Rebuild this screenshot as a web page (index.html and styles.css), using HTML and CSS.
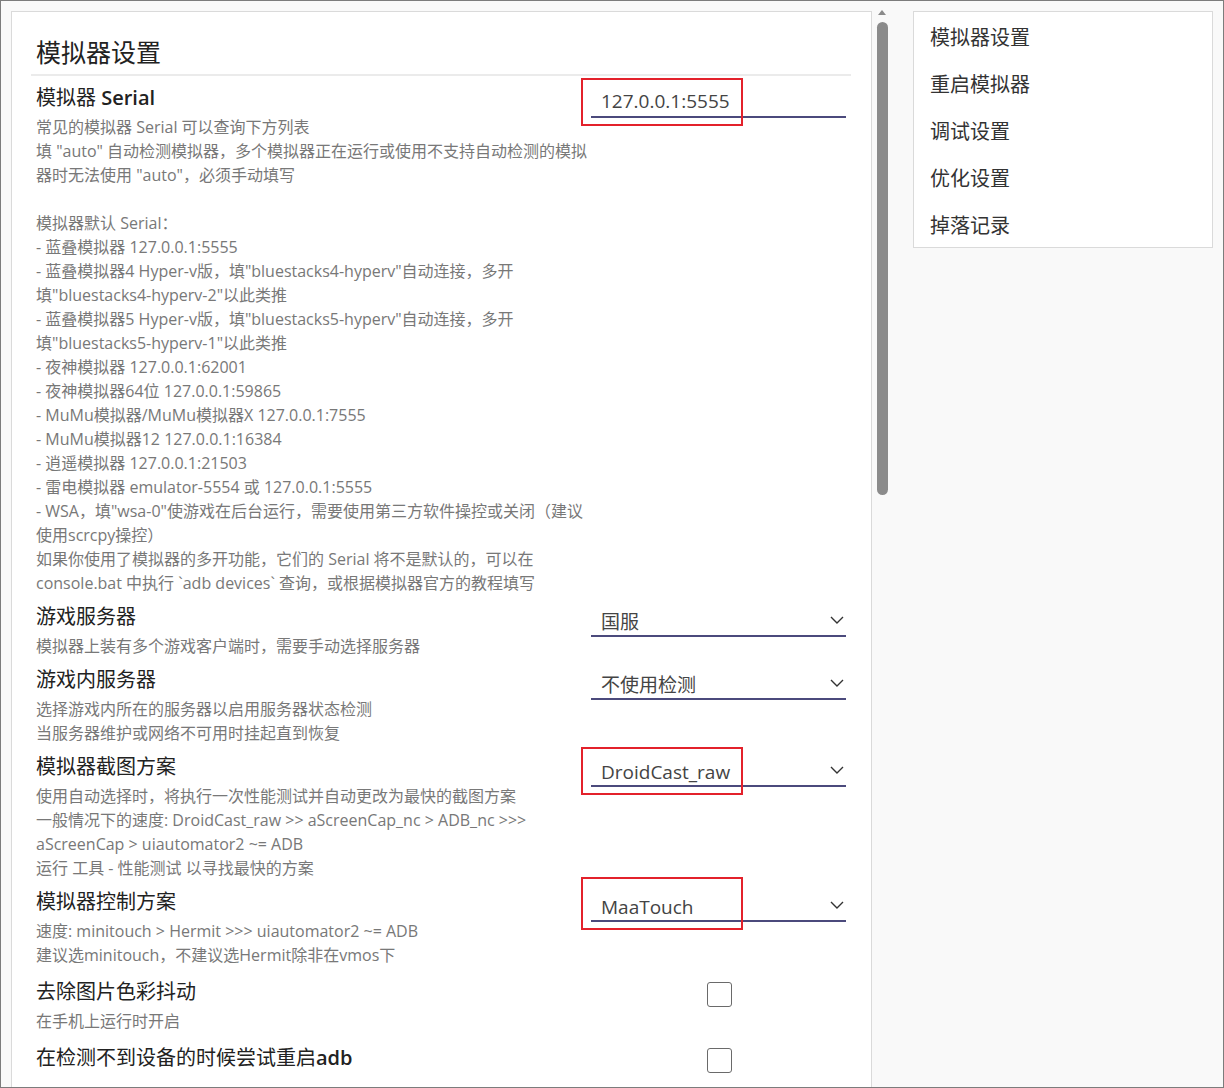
FILE: index.html
```html
<!DOCTYPE html>
<html>
<head>
    <link rel="stylesheet" href="styles.css">
</head>
<body>
    <div class="window">
        <div class="main">
            <div class="card">
                <div class="card-title">模拟器设置</div>

                <div class="row">
                    <div class="info">
                        <div class="label">模拟器 <span class="en">Serial</span></div>
                        <div class="desc">
                            常见的模拟器 Serial 可以查询下方列表<br>
                            填 "auto" 自动检测模拟器，多个模拟器正在运行或使用不支持自动检测的模拟<br>
                            器时无法使用 "auto"，必须手动填写<br>
                            <br>
                            模拟器默认 Serial：<br>
                            - 蓝叠模拟器 127.0.0.1:5555<br>
                            - 蓝叠模拟器4 Hyper-v版，填"bluestacks4-hyperv"自动连接，多开<br>
                            填"bluestacks4-hyperv-2"以此类推<br>
                            - 蓝叠模拟器5 Hyper-v版，填"bluestacks5-hyperv"自动连接，多开<br>
                            填"bluestacks5-hyperv-1"以此类推<br>
                            - 夜神模拟器 127.0.0.1:62001<br>
                            - 夜神模拟器64位 127.0.0.1:59865<br>
                            - MuMu模拟器/MuMu模拟器X 127.0.0.1:7555<br>
                            - MuMu模拟器12 127.0.0.1:16384<br>
                            - 逍遥模拟器 127.0.0.1:21503<br>
                            - 雷电模拟器 emulator-5554 或 127.0.0.1:5555<br>
                            - WSA，填"wsa-0"使游戏在后台运行，需要使用第三方软件操控或关闭（建议<br>
                            使用scrcpy操控）<br>
                            如果你使用了模拟器的多开功能，它们的 Serial 将不是默认的，可以在<br>
                            console.bat 中执行 `adb devices` 查询，或根据模拟器官方的教程填写
                        </div>
                    </div>
                    <div class="control">
                        <input class="input" type="text" value="127.0.0.1:5555">
                        <div class="mark"></div>
                    </div>
                </div>

                <div class="row">
                    <div class="info">
                        <div class="label">游戏服务器</div>
                        <div class="desc">模拟器上装有多个游戏客户端时，需要手动选择服务器</div>
                    </div>
                    <div class="control">
                        <div class="select">
                            <span>国服</span>
                            <svg class="chevron" width="14" height="8" viewBox="0 0 14 8"><polyline points="1,1 7,7 13,1" fill="none" stroke="#333" stroke-width="1.4"/></svg>
                        </div>
                    </div>
                </div>

                <div class="row">
                    <div class="info">
                        <div class="label">游戏内服务器</div>
                        <div class="desc">
                            选择游戏内所在的服务器以启用服务器状态检测<br>
                            当服务器维护或网络不可用时挂起直到恢复
                        </div>
                    </div>
                    <div class="control">
                        <div class="select">
                            <span>不使用检测</span>
                            <svg class="chevron" width="14" height="8" viewBox="0 0 14 8"><polyline points="1,1 7,7 13,1" fill="none" stroke="#333" stroke-width="1.4"/></svg>
                        </div>
                    </div>
                </div>

                <div class="row">
                    <div class="info">
                        <div class="label">模拟器截图方案</div>
                        <div class="desc">
                            使用自动选择时，将执行一次性能测试并自动更改为最快的截图方案<br>
                            一般情况下的速度: DroidCast_raw &gt;&gt; aScreenCap_nc &gt; ADB_nc &gt;&gt;&gt;<br>
                            aScreenCap &gt; uiautomator2 ~= ADB<br>
                            运行 工具 - 性能测试 以寻找最快的方案
                        </div>
                    </div>
                    <div class="control">
                        <div class="select">
                            <span>DroidCast_raw</span>
                            <svg class="chevron" width="14" height="8" viewBox="0 0 14 8"><polyline points="1,1 7,7 13,1" fill="none" stroke="#333" stroke-width="1.4"/></svg>
                        </div>
                        <div class="mark"></div>
                    </div>
                </div>

                <div class="row">
                    <div class="info">
                        <div class="label">模拟器控制方案</div>
                        <div class="desc">
                            速度: minitouch &gt; Hermit &gt;&gt;&gt; uiautomator2 ~= ADB<br>
                            建议选minitouch，不建议选Hermit除非在vmos下
                        </div>
                    </div>
                    <div class="control">
                        <div class="select">
                            <span>MaaTouch</span>
                            <svg class="chevron" width="14" height="8" viewBox="0 0 14 8"><polyline points="1,1 7,7 13,1" fill="none" stroke="#333" stroke-width="1.4"/></svg>
                        </div>
                        <div class="mark tall"></div>
                    </div>
                </div>

                <div class="row row-check">
                    <div class="info">
                        <div class="label">去除图片色彩抖动</div>
                        <div class="desc">在手机上运行时开启</div>
                    </div>
                    <div class="control control-check">
                        <div class="checkbox"></div>
                    </div>
                </div>

                <div class="row row-check">
                    <div class="info">
                        <div class="label">在检测不到设备的时候尝试重启<span class="en">adb</span></div>
                    </div>
                    <div class="control control-check">
                        <div class="checkbox"></div>
                    </div>
                </div>
            </div>

            <div class="scrollbar">
                <div class="scroll-arrow"></div>
                <div class="scroll-thumb"></div>
            </div>
        </div>

        <div class="toc">
            <div class="toc-item">模拟器设置</div>
            <div class="toc-item">重启模拟器</div>
            <div class="toc-item">调试设置</div>
            <div class="toc-item">优化设置</div>
            <div class="toc-item">掉落记录</div>
        </div>
    </div>
</body>
</html>
```

FILE: styles.css
```css
html, body {
    margin: 0;
    padding: 0;
}
body {
    font-family: 'Open Sans', 'Noto Sans CJK SC', sans-serif;
    color: #222;
    background: #f9f9f9;
}
.window {
    width: 1224px;
    height: 1088px;
    box-sizing: border-box;
    border: 1px solid #7c7c7c;
    background: #f9f9f9;
    overflow: hidden;
    display: flex;
    align-items: flex-start;
    padding: 10px 0 0 10px;
}
.main {
    display: flex;
    align-items: flex-start;
}
.card {
    width: 861px;
    box-sizing: border-box;
    background: white;
    border: 1px solid #dadada;
    padding: 0 20px 60px 19px;
}
.card-title {
    font-size: 25px;
    line-height: 36px;
    padding: 22px 5px 4px;
    border-bottom: 2px solid #ebebeb;
}
.row {
    display: flex;
    padding: 8px 5px 0;
}
.row-check {
    padding-top: 11px;
}
.info {
    flex: 1;
    min-width: 0;
}
.label {
    font-size: 20px;
    line-height: 28px;
    color: #222;
}
.en {
    font-weight: 600;
}
.desc {
    margin-top: 3px;
    font-size: 16px;
    line-height: 24px;
    color: #787878;
    white-space: nowrap;
}
.control {
    width: 255px;
    flex: none;
    position: relative;
}
.control-check {
    display: flex;
    justify-content: center;
}
.input {
    display: block;
    width: 100%;
    box-sizing: border-box;
    border: none;
    border-bottom: 2px solid #4b4a7c;
    background: transparent;
    font-family: 'Open Sans', 'Noto Sans CJK SC', sans-serif;
    font-size: 19px;
    line-height: 26px;
    height: 34px;
    padding: 2px 10px 0;
    color: #444;
    outline: none;
}
.select {
    display: flex;
    align-items: center;
    justify-content: space-between;
    border-bottom: 2px solid #4b4a7c;
    font-size: 19px;
    line-height: 26px;
    padding: 6px 2px 0 10px;
    color: #444;
}
.chevron {
    display: block;
    margin-top: -4px;
}
.mark {
    position: absolute;
    left: -10px;
    top: -6px;
    width: 162px;
    height: 48px;
    box-sizing: border-box;
    border: 2px solid #e3212b;
}
.mark.tall {
    top: -11px;
    height: 53px;
}
.checkbox {
    width: 25px;
    height: 25px;
    box-sizing: border-box;
    border: 1.5px solid #6a6a6a;
    border-radius: 3px;
    margin: 4px 0 0 2px;
    background: white;
}
.scrollbar {
    width: 41px;
    height: 1080px;
    position: relative;
}
.scroll-arrow {
    width: 0;
    height: 0;
    margin: -1px 0 0 6px;
    border-left: 4px solid transparent;
    border-right: 4px solid transparent;
    border-bottom: 5px solid #8a8a8a;
}
.scroll-thumb {
    width: 11px;
    height: 473px;
    margin: 7px 0 0 5px;
    border-radius: 6px;
    background: #8b8b8b;
}
.toc {
    width: 300px;
    box-sizing: border-box;
    background: white;
    border: 1px solid #dadada;
    padding: 2px 0 0;
}
.toc-item {
    font-size: 20px;
    line-height: 47px;
    height: 47px;
    padding-left: 16px;
    color: #333;
}
.toc-item:last-child {
    height: 45px;
}
```
